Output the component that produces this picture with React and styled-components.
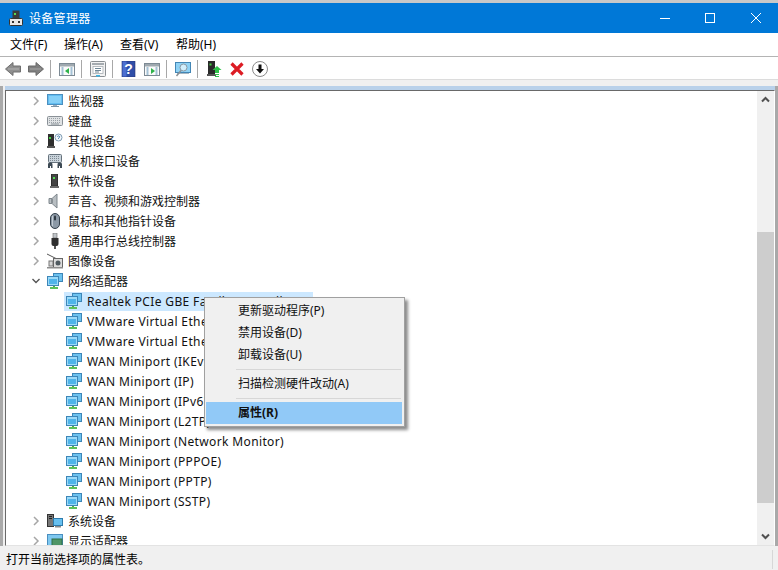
import React from 'react';
import styled, { createGlobalStyle } from 'styled-components';

const Global = createGlobalStyle`
  html, body { margin: 0; padding: 0; background: #fff; }
`;

const UI_FONT = `"Noto Sans", "Noto Sans CJK SC", sans-serif`;

const Window = styled.div`
  width: 778px;
  height: 570px;
  overflow: hidden;
  display: flex;
  flex-direction: column;
  position: relative;
  background: #f0f0f0;
  font-family: ${UI_FONT};
  font-size: 12px;
  color: #000;
  border-top: 3px solid #c8c8c8;
  box-sizing: border-box;
`;

const TitleBar = styled.div`
  height: 30px;
  flex: none;
  background: #0078d7;
  color: #fff;
  display: flex;
  align-items: center;
  padding-left: 8px;
`;

const TitleText = styled.span`
  margin-left: 5px;
  flex: 1;
  letter-spacing: 0.3px;
`;

const WinButton = styled.div`
  width: ${(p) => p.$w}px;
  height: 30px;
  box-sizing: border-box;
  padding-left: ${(p) => p.$pad || 0}px;
  display: flex;
  align-items: center;
  justify-content: center;
`;

const MenuBar = styled.div`
  height: 23px;
  flex: none;
  background: #fff;
  display: flex;
  align-items: center;
  padding-left: 2px;
  border-bottom: 1px solid #b4b4b4;
`;

const MenuItem = styled.div`
  width: ${(p) => p.$w}px;
  box-sizing: border-box;
  padding-left: 8px;
  line-height: 23px;
  white-space: nowrap;
`;

const ToolBar = styled.div`
  height: 23px;
  flex: none;
  box-sizing: border-box;
  background: #fff;
  display: flex;
  align-items: center;
  padding-left: 5px;
  padding-top: 2px;
  gap: 7px;
  border-bottom: 1px solid #dcdcdc;
`;

const ToolSep = styled.div`
  width: 1px;
  height: 18px;
  background: #a8a8a8;
  margin: 0 1px 0 -1px;
`;

const Tool = styled.div`
  width: 16px;
  height: 16px;
  display: flex;
`;

const Band = styled.div`
  height: 6px;
  flex: none;
  background: #f0f0f0;
`;

const Body = styled.div`
  flex: 1;
  min-height: 0;
  display: flex;
  border-left: 3px solid #a9a9a9;
  border-right: 3px solid #a9a9a9;
`;

const Gutter = styled.div`
  width: 2px;
  flex: none;
  background: #f0f0f0;
`;

const Pane = styled.div`
  flex: 1;
  min-width: 0;
  display: flex;
  flex-direction: column;
  background: #b9d1ea;
  padding-top: 4px;
`;

const PaneInner = styled.div`
  flex: 1;
  min-height: 0;
  display: flex;
  background: #fff;
  border-top: 1px solid #696969;
  border-left: 1px solid #696969;
  border-right: 1px solid #fff;
  border-bottom: 1px solid #e3e3e3;
`;

const Tree = styled.div`
  flex: 1;
  min-width: 0;
  overflow: hidden;
`;

const Row = styled.div`
  height: 20px;
  display: flex;
  align-items: center;
  white-space: nowrap;
  padding-left: ${(p) => (p.$child ? 58 : 26)}px;
`;

const Expander = styled.div`
  width: 13px;
  height: 16px;
  flex: none;
  display: flex;
  align-items: center;
`;

const RowBody = styled.div`
  display: flex;
  align-items: center;
  height: 19px;
  gap: 5px;
  padding-left: 2px;
  background: ${(p) => (p.$selected ? '#cce8ff' : 'transparent')};
  width: ${(p) => (p.$selected ? '249px' : 'auto')};
  box-sizing: border-box;
`;

const RowLabel = styled.span`
  line-height: 19px;
  color: #111;
  letter-spacing: ${(p) => (p.$latin ? '0.37px' : '0')};
`;

const ScrollBar = styled.div`
  width: 17px;
  flex: none;
  background: #f0f0f0;
  display: flex;
  flex-direction: column;
`;

const ScrollArrow = styled.div`
  height: 17px;
  flex: none;
  display: flex;
  align-items: center;
  justify-content: center;
`;

const ScrollTrack = styled.div`
  flex: 1;
  padding-top: 124px;
`;

const ScrollThumb = styled.div`
  height: 271px;
  background: #cdcdcd;
`;

const StatusBar = styled.div`
  height: 24px;
  flex: none;
  box-sizing: border-box;
  display: flex;
  align-items: center;
  padding: 2px 5px 0 6px;
  background: #f0f0f0;
`;

const StatusText = styled.div`
  flex: 1;
`;

const StatusGrip = styled.div`
  width: 1px;
  height: 19px;
  background: #d7d7d7;
`;

const ContextMenu = styled.div`
  position: absolute;
  left: 204px;
  top: 294px;
  width: 201px;
  box-sizing: border-box;
  background: #f0f0f0;
  border: 1px solid #a0a0a0;
  padding: 2px 2px 2px 1px;
  box-shadow: 3px 3px 3px rgba(0, 0, 0, 0.45);
`;

const ContextItem = styled.div`
  height: 22px;
  line-height: 22px;
  padding-left: 32px;
  color: #111;
  font-weight: ${(p) => (p.$active ? 700 : 400)};
  background: ${(p) => (p.$active ? '#91c9f7' : 'transparent')};
`;

const ContextSep = styled.div`
  height: 1px;
  margin: 3px 1px 3px 30px;
  background: #d7d7d7;
`;

const Svg = ({ children, size = 16 }) => (
  <svg width={size} height={size} viewBox="0 0 16 16" style={{ display: 'block', flex: 'none' }}>
    {children}
  </svg>
);

const AppIcon = () => (
  <Svg>
    <rect x="4.5" y="0.5" width="7" height="9" fill="#3a3a3a" />
    <rect x="6" y="3" width="2" height="2" fill="#58d858" />
    <rect x="1.5" y="8.5" width="13" height="7" rx="1" fill="#e8e8e8" stroke="#333" />
    <rect x="4" y="11" width="2" height="2" fill="#333" />
    <rect x="10" y="11" width="2" height="2" fill="#333" />
  </Svg>
);

const NetworkIcon = () => (
  <Svg>
    <rect x="6.5" y="0.5" width="9" height="8" fill="#6cc2ef" stroke="#3d86b8" />
    <rect x="0.5" y="3.5" width="11" height="9" fill="#9bdaf8" stroke="#3d86b8" />
    <rect x="2" y="6" width="8" height="5" fill="#4fb4ea" />
    <rect x="6" y="13" width="2" height="1" fill="#4fae4f" />
    <rect x="3" y="14" width="8" height="2" fill="#5cc05c" />
  </Svg>
);

const MonitorIcon = () => (
  <Svg>
    <rect x="0.5" y="1.5" width="15" height="10" fill="#63bdf0" stroke="#4a8fc0" />
    <rect x="2" y="3" width="12" height="7" fill="#86d0f7" />
    <rect x="6" y="12" width="4" height="1" fill="#9ab0c0" />
    <rect x="4" y="13" width="8" height="1" fill="#7d93a3" />
  </Svg>
);

const KeyboardIcon = () => (
  <Svg>
    <rect x="0.5" y="3.5" width="15" height="9" rx="1" fill="#dfe2e4" stroke="#8a9197" />
    <path d="M2 5.5h12M2 7.5h12M2 9.5h12" stroke="#9aa1a7" strokeDasharray="1 1" />
    <rect x="4" y="10.5" width="8" height="1" fill="#8a9197" />
  </Svg>
);

const OtherIcon = () => (
  <Svg>
    <rect x="1" y="1" width="6" height="12" fill="#2f2f2f" />
    <rect x="2" y="4" width="2" height="2" fill="#46d246" />
    <rect x="0" y="13" width="8" height="2" fill="#555" />
    <circle cx="11.5" cy="4.5" r="3.5" fill="#f4f8fb" stroke="#7f9db5" />
    <path d="M10.3 3.5q1.2-1.2 2.3 0q.3 1-1.1 1.6v.7" fill="none" stroke="#3b73a6" />
  </Svg>
);

const HidIcon = () => (
  <Svg>
    <rect x="1.5" y="1.5" width="13" height="8" rx="1" fill="#c9d3db" stroke="#66727c" />
    <path d="M3 3.5h10M3 5.5h10M3 7.5h10" stroke="#7d8891" strokeDasharray="1 1" />
    <path d="M1 15V11q0-1.5 2-1.5h1q1.500 0 1.500 2V15H4v-2H3v2zM10.500 15v-3.500q0-2 1.500-2h1q2 0 2 1.500v4h-2v-2h-1v2z" fill="#3e4a55" />
  </Svg>
);

const SoftwareIcon = () => (
  <Svg>
    <rect x="4" y="1" width="7" height="12" fill="#2e2e2e" />
    <rect x="5" y="1.500" width="5" height="11" fill="#444" />
    <rect x="6" y="4" width="2" height="2" fill="#56e056" />
    <rect x="3" y="13" width="9" height="2" fill="#6a6a6a" />
  </Svg>
);

const SoundIcon = () => (
  <Svg>
    <path d="M2 5.500h3L10 1v14L5 10.500H2z" fill="#b8bec2" stroke="#7f878d" />
    <path d="M5 6v4" stroke="#868e93" strokeWidth="2" />
  </Svg>
);

const MouseIcon = () => (
  <Svg>
    <rect x="3.500" y="0.500" width="9" height="15" rx="4.500" fill="#8c99a6" stroke="#36414c" />
    <rect x="7" y="2.500" width="2" height="5" rx="1" fill="#303a44" />
    <rect x="5" y="3" width="1" height="10" fill="#c2cbd3" />
  </Svg>
);

const UsbIcon = () => (
  <Svg>
    <rect x="6" y="0" width="4" height="5" fill="#bfc4c8" stroke="#666" strokeWidth="0.6" />
    <path d="M4.500 5h7v6q0 2-2 2h-3q-2 0-2-2z" fill="#2f2f2f" />
    <rect x="7" y="13" width="2" height="3" fill="#555" />
  </Svg>
);

const CameraIcon = () => (
  <Svg>
    <path d="M0 1l12 6" stroke="#555" />
    <rect x="2" y="8" width="4" height="5" fill="#d9d9d9" stroke="#777" />
    <rect x="6.500" y="5.500" width="9" height="9" fill="#dcdcdc" stroke="#666" />
    <circle cx="11" cy="10" r="2.500" fill="#4f5a60" />
    <rect x="0" y="14" width="16" height="1.500" fill="#8d8d8d" />
  </Svg>
);

const SystemIcon = () => (
  <Svg>
    <rect x="0.500" y="1.500" width="6" height="12" fill="#777" stroke="#333" />
    <rect x="2" y="3" width="3" height="1" fill="#222" />
    <rect x="2" y="5" width="3" height="1" fill="#222" />
    <rect x="6.500" y="5.500" width="9" height="7" fill="#67c0f0" stroke="#2e7cad" />
    <rect x="8" y="13" width="6" height="1.500" fill="#8a8a8a" />
  </Svg>
);

const DisplayIcon = () => (
  <Svg>
    <rect x="0.500" y="1.500" width="15" height="11" fill="#7fc8f0" stroke="#4a8fc0" />
    <rect x="5" y="6" width="10" height="8" fill="#4f9668" stroke="#2f6e48" />
  </Svg>
);

const BackIcon = () => (
  <Svg>
    <path d="M0.500 8L8 1.500V5h7.500v6H8v3.500z" fill="#8f8f8f" stroke="#6f6f6f" />
    <path d="M3 8h11" stroke="#b4b4b4" />
  </Svg>
);

const ForwardIcon = () => (
  <Svg>
    <path d="M15.500 8L8 1.500V5H0.500v6H8v3.500z" fill="#7f7f7f" stroke="#6a6a6a" />
    <path d="M2 8h11" stroke="#a8a8a8" />
  </Svg>
);

const PanelIcon = ({ color, right }) => (
  <Svg>
    <rect x="0.500" y="2.500" width="15" height="12" fill="#fbfbfb" stroke="#7d8a94" />
    <rect x="1" y="3" width="14" height="2.500" fill="#9fa9b0" />
    <path d="M2.500 7h2M2.500 9h2M2.500 11h2M2.500 13h2M11.500 7h2M11.500 9h2M11.500 11h2M11.500 13h2" stroke="#4f88b0" />
    {right ? (
      <path d="M7 7l4 3-4 3z" fill={color} />
    ) : (
      <path d="M10 7l-4 3 4 3z" fill={color} />
    )}
  </Svg>
);

const SheetIcon = () => (
  <Svg>
    <rect x="0.500" y="0.500" width="15" height="15" rx="1" fill="#f3f3f3" stroke="#8a8f93" />
    <rect x="2" y="2" width="12" height="2" fill="#a5abb0" />
    <rect x="3" y="5.500" width="10" height="7" fill="#fff" stroke="#a7adb2" strokeWidth="0.800" />
    <path d="M5 7.500h6M5 9.500h6M5 11h4" stroke="#6f8796" />
    <rect x="6" y="14" width="4" height="1.500" fill="#39b6e8" />
  </Svg>
);

const HelpIcon = () => (
  <Svg>
    <rect x="1" y="0" width="13" height="16" fill="#2f4ea8" stroke="#27346f" strokeWidth="0.600" />
    <rect x="1.500" y="0.500" width="4" height="15" fill="#4d6fd0" />
    <text x="7.500" y="13" textAnchor="middle" fontFamily="Liberation Sans, sans-serif" fontWeight="700" fontSize="14" fill="#fff">?</text>
  </Svg>
);

const ScanIcon = () => (
  <Svg>
    <rect x="0.500" y="1.500" width="15" height="10" fill="#8fd2f5" stroke="#4386b5" />
    <rect x="2" y="12" width="12" height="1" fill="#a7b7c2" />
    <circle cx="8.500" cy="6.500" r="3.500" fill="#d2eefb" stroke="#8a98a3" />
    <path d="M6 9.500L1.500 15" stroke="#8a8f93" strokeWidth="1.500" />
  </Svg>
);

const UpdateIcon = () => (
  <Svg>
    <rect x="2" y="0" width="7" height="13" fill="#2a2a2a" />
    <rect x="3.500" y="2.500" width="2" height="2" fill="#46d246" />
    <rect x="1" y="13" width="9" height="2" fill="#555" />
    <path d="M11 5l4.500 4H13v3H9V9H6.500z" fill="#2fc24a" />
    <rect x="9" y="13" width="4" height="1" fill="#2fc24a" />
    <rect x="9" y="15" width="4" height="1" fill="#2fc24a" />
  </Svg>
);

const RemoveIcon = () => (
  <Svg>
    <path d="M2.500 2.500l11 11M13.500 2.500l-11 11" stroke="#dc1c24" strokeWidth="3.200" />
  </Svg>
);

const DisableIcon = () => (
  <Svg>
    <circle cx="8" cy="8" r="7.500" fill="#fff" stroke="#8a8a8a" />
    <path d="M6.500 3.500h3V8H12l-4 4.500L4 8h2.500z" fill="#111" />
  </Svg>
);

const Chevron = ({ open }) => (
  <svg width="8" height="10" viewBox="0 0 8 10" style={{ display: 'block', marginLeft: open ? 0 : 1 }}>
    {open ? (
      <path d="M0.500 3l3.500 3.500L7.500 3" fill="none" stroke="#555" strokeWidth="1.400" />
    ) : (
      <path d="M1 1l4 4-4 4" fill="none" stroke="#a6a6a6" strokeWidth="1.500" />
    )}
  </svg>
);

const ScrollChevron = ({ down }) => (
  <svg width="9" height="7" viewBox="0 0 9 7">
    <path d={down ? 'M1 1.500l3.500 3.500L8 1.500' : 'M1 5.500L4.500 2 8 5.500'} fill="none" stroke="#505050" strokeWidth="2" />
  </svg>
);

const groupsBefore = [
  ['监视器', MonitorIcon],
  ['键盘', KeyboardIcon],
  ['其他设备', OtherIcon],
  ['人机接口设备', HidIcon],
  ['软件设备', SoftwareIcon],
  ['声音、视频和游戏控制器', SoundIcon],
  ['鼠标和其他指针设备', MouseIcon],
  ['通用串行总线控制器', UsbIcon],
  ['图像设备', CameraIcon],
];

const adapters = [
  'Realtek PCIe GBE Family Controller',
  'VMware Virtual Ethernet Adapter for VMnet1',
  'VMware Virtual Ethernet Adapter for VMnet8',
  'WAN Miniport (IKEv2)',
  'WAN Miniport (IP)',
  'WAN Miniport (IPv6)',
  'WAN Miniport (L2TP)',
  'WAN Miniport (Network Monitor)',
  'WAN Miniport (PPPOE)',
  'WAN Miniport (PPTP)',
  'WAN Miniport (SSTP)',
];

const groupsAfter = [
  ['系统设备', SystemIcon],
  ['显示适配器', DisplayIcon],
];

const GroupRow = ({ label, icon: Icon, open }) => (
  <Row>
    <Expander>
      <Chevron open={open} />
    </Expander>
    <RowBody>
      <Icon />
      <RowLabel>{label}</RowLabel>
    </RowBody>
  </Row>
);

export default function App() {
  return (
    <Window>
      <Global />
      <TitleBar>
        <AppIcon />
        <TitleText>设备管理器</TitleText>
        <WinButton $w={44}>
          <svg width="10" height="10"><path d="M0 5.500h10" stroke="#fff" /></svg>
        </WinButton>
        <WinButton $w={46}>
          <svg width="10" height="10"><rect x="0.500" y="0.500" width="9" height="9" fill="none" stroke="#fff" /></svg>
        </WinButton>
        <WinButton $w={45} $pad={1}>
          <svg width="10" height="10"><path d="M0 0l10 10M10 0L0 10" stroke="#fff" /></svg>
        </WinButton>
      </TitleBar>
      <MenuBar>
        <MenuItem $w={54}>文件(F)</MenuItem>
        <MenuItem $w={56}>操作(A)</MenuItem>
        <MenuItem $w={56}>查看(V)</MenuItem>
        <MenuItem $w={56}>帮助(H)</MenuItem>
      </MenuBar>
      <ToolBar>
        <Tool><BackIcon /></Tool>
        <Tool><ForwardIcon /></Tool>
        <ToolSep />
        <Tool><PanelIcon color="#2fb24a" /></Tool>
        <ToolSep />
        <Tool><SheetIcon /></Tool>
        <ToolSep />
        <Tool><HelpIcon /></Tool>
        <Tool><PanelIcon color="#2fb24a" right /></Tool>
        <ToolSep />
        <Tool><ScanIcon /></Tool>
        <ToolSep />
        <Tool><UpdateIcon /></Tool>
        <Tool><RemoveIcon /></Tool>
        <Tool><DisableIcon /></Tool>
      </ToolBar>
      <Band />
      <Body>
        <Gutter />
        <Pane>
          <PaneInner>
            <Tree>
              {groupsBefore.map(([label, icon]) => (
                <GroupRow key={label} label={label} icon={icon} />
              ))}
              <GroupRow label="网络适配器" icon={NetworkIcon} open />
              {adapters.map((name, i) => (
                <Row key={name} $child>
                  <RowBody $selected={i === 0}>
                    <NetworkIcon />
                    <RowLabel $latin>{name}</RowLabel>
                  </RowBody>
                </Row>
              ))}
              {groupsAfter.map(([label, icon]) => (
                <GroupRow key={label} label={label} icon={icon} />
              ))}
            </Tree>
            <ScrollBar>
              <ScrollArrow><ScrollChevron /></ScrollArrow>
              <ScrollTrack><ScrollThumb /></ScrollTrack>
              <ScrollArrow><ScrollChevron down /></ScrollArrow>
            </ScrollBar>
          </PaneInner>
        </Pane>
      </Body>
      <StatusBar>
        <StatusText>打开当前选择项的属性表。</StatusText>
        <StatusGrip />
      </StatusBar>
      <ContextMenu>
        <ContextItem>更新驱动程序(P)</ContextItem>
        <ContextItem>禁用设备(D)</ContextItem>
        <ContextItem>卸载设备(U)</ContextItem>
        <ContextSep />
        <ContextItem>扫描检测硬件改动(A)</ContextItem>
        <ContextSep />
        <ContextItem $active>属性(R)</ContextItem>
      </ContextMenu>
    </Window>
  );
}
